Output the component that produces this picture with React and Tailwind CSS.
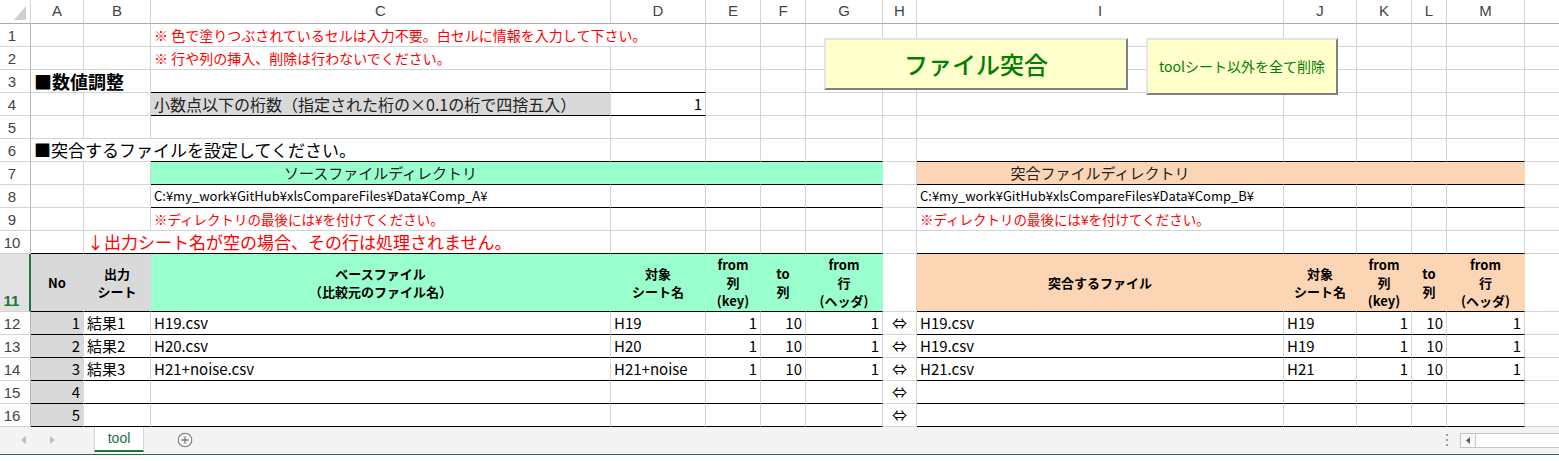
import React from "react";

const GRID =
  "grid grid-cols-[31px_53px_67px_460px_95px_55px_45px_77px_34px_367px_73px_55px_35px_78px_1fr]";
const base = "flex whitespace-nowrap border-r border-b border-[#d4d4d4]";
const DATA = "items-end px-[3px] pb-[1px] leading-[20px]";
const HEAD =
  "flex-col items-center justify-center text-center font-bold text-[13px] leading-[18px] border-b-black";
const GREEN = "bg-[#99ffcc] border-r-[#99ffcc]";
const ORANGE = "bg-[#fcd5b4] border-r-[#fcd5b4]";
const GRAY = "bg-[#d9d9d9] border-r-[#d9d9d9]";

function C({ c = "", children }) {
  return <div className={base + " " + c}>{children}</div>;
}

function Blank({ n, c = "" }) {
  return Array.from({ length: n }).map((_, i) => <C key={i} c={c} />);
}

function Fill() {
  return <div className="border-b border-[#d4d4d4]" />;
}

function RH({ n }) {
  return (
    <div className="flex items-end justify-center pr-[6px] border-r border-b border-r-[#b7b7b7] border-b-[#d4d4d4] text-[15px] leading-[20px] text-[#444] font-['Liberation_Sans',sans-serif]">
      {n}
    </div>
  );
}

function Row({ h = "h-[23px]", children }) {
  return <div className={GRID + " " + h}>{children}</div>;
}

const letters = ["A", "B", "C", "D", "E", "F", "G", "H", "I", "J", "K", "L", "M"];

const rows = [
  { no: 1, out: "結果1", base: "H19.csv", sheet: "H19", cmp: "H19.csv", cs: "H19" },
  { no: 2, out: "結果2", base: "H20.csv", sheet: "H20", cmp: "H19.csv", cs: "H19" },
  { no: 3, out: "結果3", base: "H21+noise.csv", sheet: "H21+noise", cmp: "H21.csv", cs: "H21" },
  { no: 4 },
  { no: 5 },
];

export default function App() {
  return (
    <div className="w-[1559px] h-[461px] bg-white overflow-hidden text-black font-['Noto_Sans_CJK_JP',sans-serif] text-[15px]">
      <div className="relative">
        {/* column headers */}
        <div className={GRID + " h-[24px]"}>
          <div className="flex items-end justify-end pr-[4px] pb-[3px] border-r border-b border-r-[#d4d4d4] border-b-[#ababab]">
            <svg width="12" height="14" viewBox="0 0 12 14">
              <polygon points="12,0 12,14 0,14" fill="#cfcfcf" />
            </svg>
          </div>
          {letters.map((l) => (
            <div
              key={l}
              className="flex items-center justify-center border-r border-b border-r-[#d4d4d4] border-b-[#ababab] text-[15px] text-[#444] font-['Liberation_Sans',sans-serif]"
            >
              {l}
            </div>
          ))}
          <div className="border-b border-[#ababab]" />
        </div>

        {/* 1 */}
        <Row>
          <RH n={1} />
          <Blank n={2} />
          <C c={"col-span-2 text-[#ff0000] text-[14px] " + DATA}>
            ※ 色で塗りつぶされているセルは入力不要。白セルに情報を入力して下さい。
          </C>
          <Blank n={9} />
          <Fill />
        </Row>
        {/* 2 */}
        <Row>
          <RH n={2} />
          <Blank n={2} />
          <C c={"text-[#ff0000] text-[14px] " + DATA}>※ 行や列の挿入、削除は行わないでください。</C>
          <Blank n={10} />
          <Fill />
        </Row>
        {/* 3 */}
        <Row>
          <RH n={3} />
          <C c={"col-span-2 font-bold text-[18px] " + DATA}>■数値調整</C>
          <Blank n={2} c="border-b-black" />
          <Blank n={9} />
          <Fill />
        </Row>
        {/* 4 */}
        <Row>
          <RH n={4} />
          <Blank n={2} />
          <C c={"border-b-black text-[#222] text-[16px] " + GRAY + " " + DATA}>
            小数点以下の桁数（指定された桁の×0.1の桁で四捨五入）
          </C>
          <C c={"border-b-black justify-end " + DATA}>1</C>
          <Blank n={9} />
          <Fill />
        </Row>
        {/* 5 */}
        <Row>
          <RH n={5} />
          <Blank n={13} />
          <Fill />
        </Row>
        {/* 6 */}
        <Row>
          <RH n={6} />
          <div className="col-span-2 flex whitespace-nowrap border-b border-[#d4d4d4] items-end px-[3px] pb-[1px] leading-[20px] text-[17px]">
            ■突合するファイルを設定してください。
          </div>
          <Blank n={5} c="border-b-black" />
          <C />
          <Blank n={5} c="border-b-black" />
          <Fill />
        </Row>
        {/* 7 */}
        <Row>
          <RH n={7} />
          <Blank n={2} />
          <C c={"border-b-black justify-center text-[#222] " + GREEN + " " + DATA}>ソースファイルディレクトリ</C>
          <Blank n={4} c={"border-b-black " + GREEN} />
          <C />
          <C c={"border-b-black justify-center text-[#222] " + ORANGE + " " + DATA}>突合ファイルディレクトリ</C>
          <Blank n={4} c={"border-b-black " + ORANGE} />
          <Fill />
        </Row>
        {/* 8 */}
        <Row>
          <RH n={8} />
          <Blank n={2} />
          <C c={"border-b-black text-[13px] " + DATA}>C:¥my_work¥GitHub¥xlsCompareFiles¥Data¥Comp_A¥</C>
          <Blank n={4} c="border-b-black" />
          <C />
          <C c={"border-b-black text-[13px] " + DATA}>C:¥my_work¥GitHub¥xlsCompareFiles¥Data¥Comp_B¥</C>
          <Blank n={4} c="border-b-black" />
          <Fill />
        </Row>
        {/* 9 */}
        <Row>
          <RH n={9} />
          <Blank n={2} />
          <C c={"text-[#ff0000] text-[13.5px] " + DATA}>※ディレクトリの最後には¥を付けてください。</C>
          <Blank n={5} />
          <C c={"text-[#ff0000] text-[13.5px] " + DATA}>※ディレクトリの最後には¥を付けてください。</C>
          <Blank n={4} />
          <Fill />
        </Row>
        {/* 10 */}
        <Row>
          <RH n={10} />
          <C c="border-b-black" />
          <C c={"col-span-2 border-b-black text-[#ff0000] text-[17px] " + DATA}>
            ↓出力シート名が空の場合、その行は処理されません。
          </C>
          <Blank n={4} c="border-b-black" />
          <C />
          <Blank n={5} c="border-b-black" />
          <Fill />
        </Row>
        {/* 11 */}
        <Row h="h-[58px]">
          <div className="flex items-end justify-center pr-[6px] border-b border-r-2 border-b-[#d4d4d4] border-r-[#217346] bg-[#e1e1e1] text-[15px] leading-[20px] font-bold text-[#217346] font-['Liberation_Sans',sans-serif]">
            11
          </div>
          <C c={HEAD + " " + GRAY}>No</C>
          <C c={HEAD + " " + GRAY}>
            <span>出力</span>
            <span>シート</span>
          </C>
          <C c={HEAD + " " + GREEN}>
            <span>ベースファイル</span>
            <span>（比較元のファイル名）</span>
          </C>
          <C c={HEAD + " " + GREEN}>
            <span>対象</span>
            <span>シート名</span>
          </C>
          <C c={HEAD + " " + GREEN}>
            <span>from</span>
            <span>列</span>
            <span>(key)</span>
          </C>
          <C c={HEAD + " " + GREEN}>
            <span>to</span>
            <span>列</span>
          </C>
          <C c={HEAD + " " + GREEN}>
            <span>from</span>
            <span>行</span>
            <span>(ヘッダ)</span>
          </C>
          <C />
          <C c={HEAD + " " + ORANGE}>突合するファイル</C>
          <C c={HEAD + " " + ORANGE}>
            <span>対象</span>
            <span>シート名</span>
          </C>
          <C c={HEAD + " " + ORANGE}>
            <span>from</span>
            <span>列</span>
            <span>(key)</span>
          </C>
          <C c={HEAD + " " + ORANGE}>
            <span>to</span>
            <span>列</span>
          </C>
          <C c={HEAD + " " + ORANGE}>
            <span>from</span>
            <span>行</span>
            <span>(ヘッダ)</span>
          </C>
          <Fill />
        </Row>
        {/* 12-16 */}
        {rows.map((r) => (
          <Row key={r.no}>
            <RH n={r.no + 11} />
            <C c={"border-b-black justify-end " + GRAY + " " + DATA}>{r.no}</C>
            <C c={"border-b-black " + DATA}>{r.out}</C>
            <C c={"border-b-black " + DATA}>{r.base}</C>
            <C c={"border-b-black " + DATA}>{r.sheet}</C>
            <C c={"border-b-black justify-end " + DATA}>{r.base ? 1 : ""}</C>
            <C c={"border-b-black justify-end " + DATA}>{r.base ? 10 : ""}</C>
            <C c={"border-b-black justify-end " + DATA}>{r.base ? 1 : ""}</C>
            <C c={"justify-center " + DATA}>⇔</C>
            <C c={"border-b-black " + DATA}>{r.cmp}</C>
            <C c={"border-b-black " + DATA}>{r.cs}</C>
            <C c={"border-b-black justify-end " + DATA}>{r.base ? 1 : ""}</C>
            <C c={"border-b-black justify-end " + DATA}>{r.base ? 10 : ""}</C>
            <C c={"border-b-black justify-end " + DATA}>{r.base ? 1 : ""}</C>
            <Fill />
          </Row>
        ))}

        {/* buttons over the sheet */}
        <div className="absolute left-[824px] top-[38px] w-[304px] h-[52px] flex items-center justify-center bg-[#ffffcc] border-2 border-t-[#e4e4e4] border-l-[#e4e4e4] border-r-[#808080] border-b-[#808080] text-[#008000] text-[24px] font-medium">
          ファイル突合
        </div>
        <div className="absolute left-[1146px] top-[38px] w-[192px] h-[57px] flex items-center justify-center bg-[#ffffcc] border-2 border-t-[#e4e4e4] border-l-[#e4e4e4] border-r-[#808080] border-b-[#808080] text-[#008000] text-[14px]">
          toolシート以外を全て削除
        </div>
      </div>

      {/* sheet tabs */}
      <div className="h-[28px] bg-[#f3f3f3] border-b border-[#217346] flex items-start font-['Liberation_Sans',sans-serif]">
        <div className="w-[94px] h-[26px] flex items-center">
          <svg className="ml-[21px]" width="5" height="8" viewBox="0 0 5 8">
            <polygon points="5,0 5,8 0,4" fill="#c0c0c0" />
          </svg>
          <svg className="ml-[24px]" width="5" height="8" viewBox="0 0 5 8">
            <polygon points="0,0 0,8 5,4" fill="#c0c0c0" />
          </svg>
        </div>
        <div className="w-[50px] h-[25px] bg-white border-x border-[#d4d4d4] border-b-2 border-b-[#217346] flex items-center justify-center text-[14px] text-[#217346]">
          tool
        </div>
        <div className="h-[26px] flex items-center ml-[33px]">
          <svg width="16" height="16" viewBox="0 0 16 16">
            <circle cx="8" cy="8" r="6.8" fill="none" stroke="#7a7a7a" strokeWidth="1.1" />
            <path d="M8 4.5v7M4.5 8h7" stroke="#7a7a7a" strokeWidth="1.3" />
          </svg>
        </div>
        <div className="flex-1" />
        <div className="h-[26px] flex flex-col items-center justify-center gap-[3px] w-[6px] mr-[10px]">
          <div className="w-[2px] h-[2px] bg-[#a0a0a0]" />
          <div className="w-[2px] h-[2px] bg-[#a0a0a0]" />
          <div className="w-[2px] h-[2px] bg-[#a0a0a0]" />
        </div>
        <div className="mt-[6px] w-[99px] h-[15px] flex bg-white border border-[#c6c6c6] border-r-0">
          <div className="w-[15px] h-full flex items-center justify-center border-r border-[#c6c6c6] bg-[#f7f7f7]">
            <svg width="4" height="7" viewBox="0 0 4 7">
              <polygon points="4,0 4,7 0,3.5" fill="#606060" />
            </svg>
          </div>
        </div>
      </div>
    </div>
  );
}
